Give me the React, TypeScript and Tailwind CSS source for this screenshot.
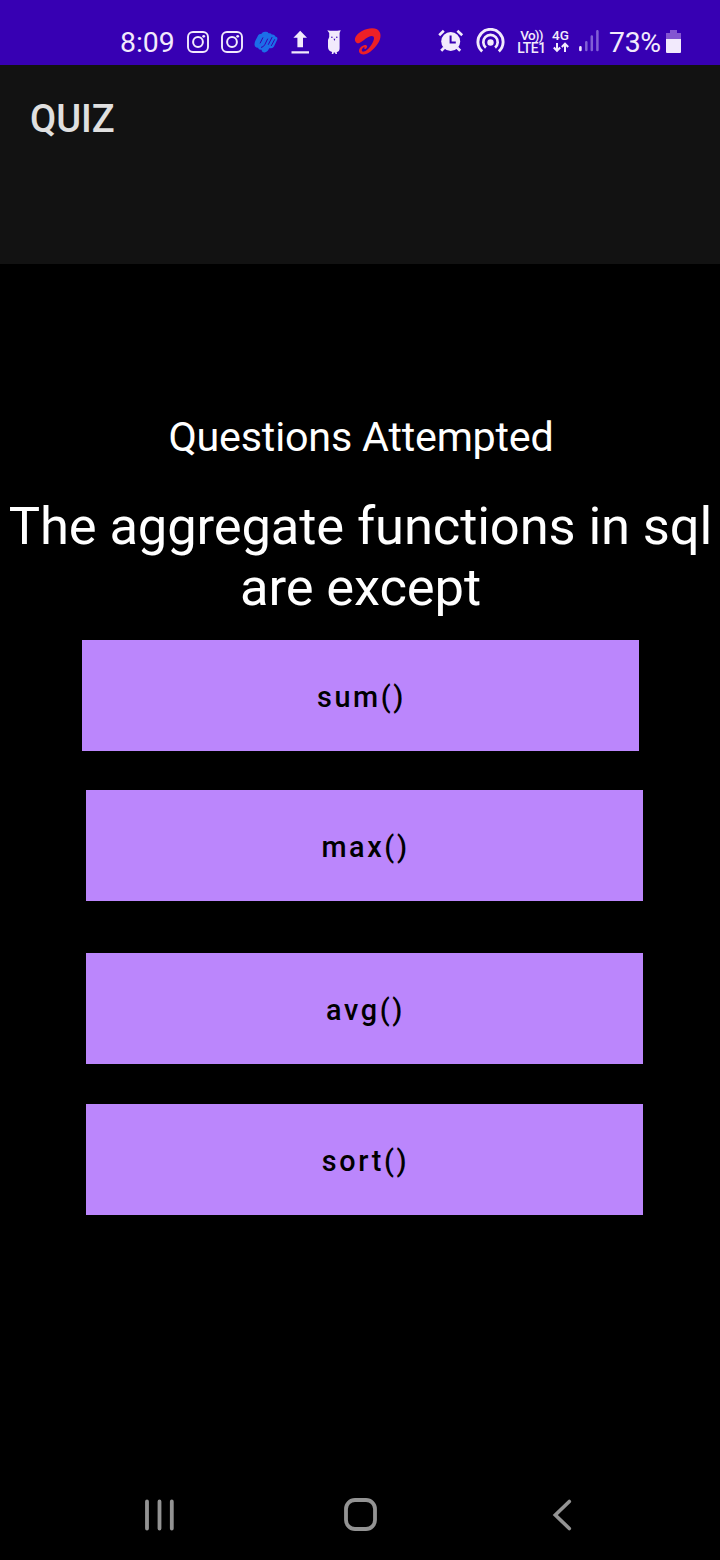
import type { ReactNode } from "react";

function Icon({ box, className, children }: { box: string; className: string; children: ReactNode }) {
  return (
    <svg viewBox={box} className={`block shrink-0 ${className}`} fill="none" aria-hidden="true">
      {children}
    </svg>
  );
}

function Instagram({ className }: { className: string }) {
  return (
    <Icon box="0 0 22 22" className={`h-[22px] w-[22px] ${className}`}>
      <rect x="1" y="1" width="20" height="20" rx="5" stroke="#f2eafc" strokeWidth="1.9" />
      <circle cx="11" cy="11" r="4.9" stroke="#f2eafc" strokeWidth="2" />
      <circle cx="16.7" cy="5.3" r="1.4" fill="#f2eafc" />
    </Icon>
  );
}

function StatusBar() {
  return (
    <header className="flex h-[65px] shrink-0 items-start bg-[#3700b3] text-[#f2eafc]">
      <span className="ml-[120px] mt-[26px] w-[67px] text-[28.4px] leading-[33px]">8:09</span>
      <Instagram className="mt-[31px]" />
      <Instagram className="ml-3 mt-[31px]" />

      <Icon box="0 0 24 22" className="ml-[11px] mt-[31px] h-[22px] w-6">
        <path
          d="M4.2 4.2Q5.2 2.6 7.2 3Q8.6 0.8 11 0.8Q13.6 0.4 14.6 2.2Q16.8 1.8 17.8 3.6Q20.5 3.2 21.4 5.4Q24 6 23.3 8.6L20 15.4Q19 17.4 16.8 17.2L15.2 17.3Q13.5 21.2 10.6 21.4Q8 21.6 7.2 18.6Q4.6 18.9 4 16.7Q0.6 16.8 0.5 13.6Q0.4 11.4 1.6 9.2Z"
          fill="#1c6ee8"
        />
        <path d="M8.8 6.8 6.2 12M13.6 8 10.8 13.6Q9.6 16 7.4 16.4M18 6.4 14.4 13.4M20.6 8.6 17.4 14.6" stroke="#3700b3" strokeWidth="1" strokeLinecap="round" />
      </Icon>

      <Icon box="0 0 18 24" className="ml-[13px] mt-[30px] h-6 w-[18px]">
        <path d="M9.2 0.7 16 7.8H12V17.2H6.4V7.8H2.4ZM0.5 21.2H18V23.4H0.5Z" fill="#f2eafc" />
      </Icon>

      <Icon box="0 0 14 24" className="ml-[18px] mt-[30px] h-6 w-[14px]">
        <path d="M0.3 0.3Q4 1 7 0.8Q10 0.8 13.7 0.2L12.6 3V18.5Q12.4 21.6 9.7 22.1L10 24H8.5L8 22.4H6.8L6.3 24H4.7L5.1 22.1Q1 21 1 17V10L2.2 7V3Z" fill="#f2eafc" />
        <circle cx="4.9" cy="7.2" r="0.75" fill="#3700b3" />
        <circle cx="9.8" cy="7.2" r="0.75" fill="#3700b3" />
        <path d="M6.5 8.8h1.8L7.4 11Z" fill="#3700b3" />
      </Icon>

      <Icon box="0 0 27 27" className="ml-[13px] mt-[28px] h-[27px] w-[27px]">
        <path
          d="M2.5 14.8C-1 12 1.5 6.5 8 3C15.5-1 24-0.9 26 4.8C28.2 11 23 18.3 16.6 23.5C12.3 27 7.2 27.5 5.4 24.5C3.8 21.5 7.3 17.7 10.2 17.2C13.2 16.7 14.1 18.7 12.1 20.5C11 21.5 10.2 21 10.5 20.1C10.8 19.2 10 19 9.1 19.7C7.2 21.2 7.2 24.1 9.9 23.6C14.1 22.8 19.6 14.9 20 10.6C20.2 7.6 17.8 7.2 14.4 9C10.8 10.9 7.8 14.1 4.9 15.2C4 15.5 3.2 15.4 2.5 14.8Z"
          fill="#ed2027"
        />
      </Icon>

      <Icon box="0 0 26 24" className="ml-[57px] mt-[29px] h-6 w-[26px]">
        <circle cx="12.7" cy="12.5" r="9.5" fill="#f2eafc" />
        <path d="M1.2 6.2 5.8 1.7M19.4 1.7 24.2 6.2" stroke="#f2eafc" strokeWidth="2.6" />
        <path d="m6.2 18.8-3 3M19.2 18.8l3 3" stroke="#f2eafc" strokeWidth="2.8" />
        <path d="M12.6 6.6v6.8h5.2" stroke="#3700b3" strokeWidth="2" />
      </Icon>

      <Icon box="0 0 29 25" className="ml-[12px] mt-[28px] h-[25px] w-[29px]">
        <circle cx="14.5" cy="14.5" r="3.2" fill="#f2eafc" />
        <path d="M9.9 19.6A7.2 7.2 0 1 1 19.1 19.6" stroke="#f2eafc" strokeWidth="2.7" />
        <path d="M6.2 23.4A12.6 12.6 0 1 1 22.8 23.4" stroke="#f2eafc" strokeWidth="2.9" />
      </Icon>

      <div className="ml-[12px] mt-[29px] flex w-[29px] shrink-0 flex-col items-center whitespace-nowrap font-medium">
        <span className="text-[13.5px] leading-[13px] tracking-[-0.8px]">Vo))</span>
        <span className="text-[13.8px] leading-[13px] tracking-[-0.3px]">LTE1</span>
      </div>

      <div className="ml-[6px] mt-[29px] flex w-[17px] shrink-0 flex-col items-center font-medium">
        <span className="text-[13.5px] leading-[13px]">4G</span>
        <Icon box="0 0 16 11" className="h-[11px] w-4">
          <path d="M4 1v7.2M0.8 5.5 4 8.8 7.2 5.5M12 10V2.4M8.8 5 12 1.7 15.2 5" stroke="#f2eafc" strokeWidth="2" />
        </Icon>
      </div>

      <Icon box="0 0 20 22" className="ml-[10px] mt-[30px] h-[22px] w-5">
        <path d="M1.4 17.4V20" stroke="#f2eafc" strokeWidth="2.6" strokeLinecap="round" />
        <path d="M7.3 12.2V20M12.8 6.4V20M18.4 1.2V20" stroke="#815fd5" strokeWidth="2.5" strokeLinecap="round" />
      </Icon>

      <span className="ml-[10px] mt-[26px] w-[57px] text-[28.4px] leading-[33px] tracking-[-0.3px]">73%</span>
      <Icon box="0 0 15 23" className="mt-[30px] h-[23px] w-[15px]">
        <path d="M4 0H11V3H15V9H0V3H4Z" fill="#8355d1" />
        <path d="M0 9H15V22Q15 23 14 23H1Q0 23 0 22Z" fill="#f2eafc" />
      </Icon>
    </header>
  );
}

function Answer({ label, className }: { label: string; className: string }) {
  return (
    <button
      type="button"
      className={`flex h-[111px] w-[557px] shrink-0 items-center justify-center bg-[#bb86fc] pl-[2px] pt-[4px] text-[28.8px] font-medium tracking-[2.6px] text-black ${className}`}
    >
      {label}
    </button>
  );
}

function NavigationBar() {
  return (
    <nav className="mt-auto flex h-[91px] shrink-0 items-center">
      <button type="button" aria-label="Recent apps" className="ml-[144px]">
        <Icon box="0 0 31 32" className="h-8 w-[31px]">
          <path d="M3 2.5V29.5M15.5 2.5V29.5M27.8 2.5V29.5" stroke="#939393" strokeWidth="3.8" strokeLinecap="round" />
        </Icon>
      </button>
      <button type="button" aria-label="Home" className="ml-[169px]">
        <Icon box="0 0 33 33" className="h-[33px] w-[33px]">
          <rect x="2" y="2" width="29" height="29" rx="9" stroke="#939393" strokeWidth="3.8" />
        </Icon>
      </button>
      <button type="button" aria-label="Back" className="ml-[175px]">
        <Icon box="0 0 20 32" className="h-8 w-5">
          <path d="M17.3 2.5 3.3 16 17.3 29.5" stroke="#939393" strokeWidth="3.6" strokeLinecap="round" />
        </Icon>
      </button>
    </nav>
  );
}

export default function App() {
  return (
    <div className="flex h-[1560px] w-[720px] flex-col overflow-hidden bg-black font-[Roboto,sans-serif]">
      <StatusBar />
      <div className="h-[199px] shrink-0 bg-[#121212] pl-[30px] pt-[32px]">
        <h1 className="text-[38px] font-medium leading-[45px] text-[#e0e0e0]">QUIZ</h1>
      </div>
      <main className="flex flex-col text-white">
        <p className="mt-[149px] pl-[2px] text-center text-[41.25px] leading-[48px] tracking-[-0.2px]">Questions Attempted</p>
        <h2 className="mt-[35px] h-[122px] whitespace-nowrap pl-px text-center text-[52.5px] font-normal leading-[61px] tracking-[-0.12px]">
          The aggregate functions in sql
          <br />
          are except
        </h2>
        <Answer label="sum()" className="ml-[82px] mt-[22px]" />
        <Answer label="max()" className="ml-[86px] mt-[39px]" />
        <Answer label="avg()" className="ml-[86px] mt-[52px]" />
        <Answer label="sort()" className="ml-[86px] mt-[40px]" />
      </main>
      <NavigationBar />
    </div>
  );
}
